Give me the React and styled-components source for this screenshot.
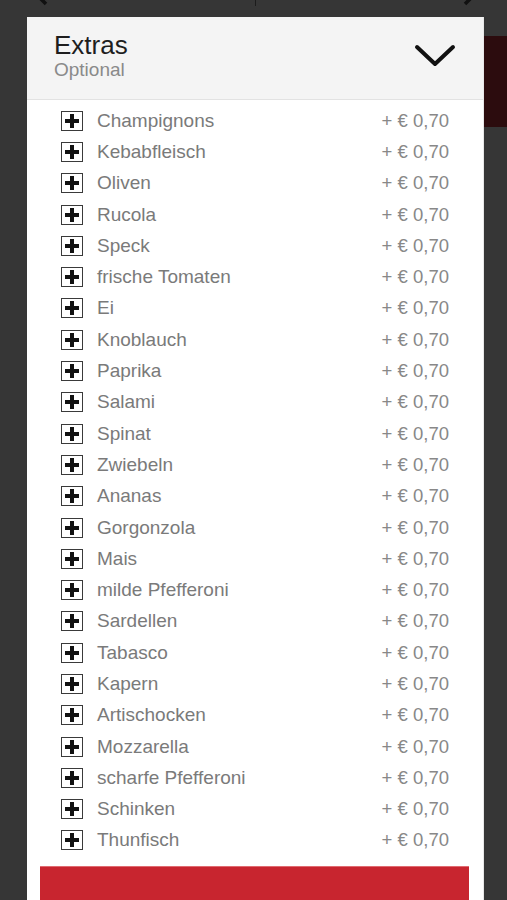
import React from 'react';
import styled, { createGlobalStyle } from 'styled-components';

const GlobalStyle = createGlobalStyle`
  html, body {
    margin: 0;
    padding: 0;
    background: #363636;
    font-family: "Liberation Sans", Arial, Helvetica, sans-serif;
    overflow: hidden;
  }
`;

const Screen = styled.div`
  width: 507px;
  height: 900px;
  overflow: hidden;
  background: #363636;
  display: flex;
  flex-direction: column;
`;

const TopBar = styled.div`
  height: 17px;
  flex-shrink: 0;
  overflow: hidden;
  display: flex;
  align-items: flex-start;
  justify-content: space-between;
  padding: 0 30px 0 34px;
`;

const NavChevron = styled.svg`
  margin-top: -14px;
  width: 16px;
  height: 20px;
`;

const Divider = styled.div`
  width: 1px;
  height: 6px;
  background: #1c1c1c;
`;

const Stage = styled.div`
  flex: 1 0 auto;
  display: flex;
  padding-left: 27px;
`;

const Modal = styled.div`
  width: 456px;
  background: #fff;
  display: flex;
  flex-direction: column;
  border-right: 1px solid #e8e8e8;
`;

const SideStrip = styled.div`
  flex: 1;
  padding-top: 19px;
`;

const BehindBlock = styled.div`
  height: 91px;
  background: #2c0c0e;
`;

const Header = styled.div`
  height: 83px;
  flex-shrink: 0;
  box-sizing: border-box;
  background: #f4f4f4;
  border-bottom: 1px solid #e2e2e2;
  display: flex;
  align-items: center;
  justify-content: space-between;
  padding: 0 27px 4px 27px;
`;

const TitleBlock = styled.div`
  display: flex;
  flex-direction: column;
`;

const Title = styled.div`
  font-size: 26px;
  line-height: 28px;
  color: #1e1e1e;
`;

const Subtitle = styled.div`
  font-size: 19px;
  line-height: 22px;
  color: #8a8a8a;
`;

const List = styled.div`
  display: flex;
  flex-direction: column;
  padding: 5px 34px 0 34px;
`;

const Row = styled.div`
  height: 31.3px;
  display: flex;
  align-items: center;
`;

const CheckBox = styled.div`
  width: 20px;
  height: 18px;
  border: 1.5px solid #3a3a3a;
  box-sizing: content-box;
  display: flex;
  align-items: center;
  justify-content: center;
  margin-right: 14px;
  background: #fff;
`;

const Name = styled.span`
  flex: 1;
  font-size: 19px;
  color: #7a7a7a;
  white-space: nowrap;
`;

const Price = styled.span`
  font-size: 18.5px;
  color: #888;
  white-space: nowrap;
`;

const AddButton = styled.button`
  margin: 10px 14px 0 13px;
  height: 70px;
  flex-shrink: 0;
  border: none;
  border-top: 1px solid #e06a70;
  background: #c8252f;
  color: #fff;
  font-family: inherit;
  font-size: 20px;
  padding: 34px 0 0 40px;
  text-align: center;
  display: flex;
  align-items: flex-start;
  justify-content: center;
`;

const extras = [
  'Champignons',
  'Kebabfleisch',
  'Oliven',
  'Rucola',
  'Speck',
  'frische Tomaten',
  'Ei',
  'Knoblauch',
  'Paprika',
  'Salami',
  'Spinat',
  'Zwiebeln',
  'Ananas',
  'Gorgonzola',
  'Mais',
  'milde Pfefferoni',
  'Sardellen',
  'Tabasco',
  'Kapern',
  'Artischocken',
  'Mozzarella',
  'scharfe Pfefferoni',
  'Schinken',
  'Thunfisch',
];

const PlusIcon = () => (
  <svg width="14" height="14" viewBox="0 0 14 14">
    <path d="M5 0h4v5h5v4H9v5H5V9H0V5h5z" fill="#111" />
  </svg>
);

export default function App() {
  return (
    <>
      <GlobalStyle />
      <Screen>
        <TopBar>
          <NavChevron viewBox="0 0 16 20">
            <path d="M12 2 L4 10 L12 18" stroke="#111" strokeWidth="3.5" fill="none" />
          </NavChevron>
          <Divider />
          <NavChevron viewBox="0 0 16 20">
            <path d="M4 2 L12 10 L4 18" stroke="#111" strokeWidth="3.5" fill="none" />
          </NavChevron>
        </TopBar>
        <Stage>
          <Modal>
            <Header>
              <TitleBlock>
                <Title>Extras</Title>
                <Subtitle>Optional</Subtitle>
              </TitleBlock>
              <svg width="42" height="24" viewBox="0 0 42 24">
                <path
                  d="M3 3 L21 20 L39 3"
                  stroke="#111"
                  strokeWidth="4"
                  strokeLinecap="round"
                  strokeLinejoin="round"
                  fill="none"
                />
              </svg>
            </Header>
            <List>
              {extras.map((name) => (
                <Row key={name}>
                  <CheckBox>
                    <PlusIcon />
                  </CheckBox>
                  <Name>{name}</Name>
                  <Price>+ € 0,70</Price>
                </Row>
              ))}
            </List>
            <AddButton>Hinzufügen</AddButton>
          </Modal>
          <SideStrip>
            <BehindBlock />
          </SideStrip>
        </Stage>
      </Screen>
    </>
  );
}
